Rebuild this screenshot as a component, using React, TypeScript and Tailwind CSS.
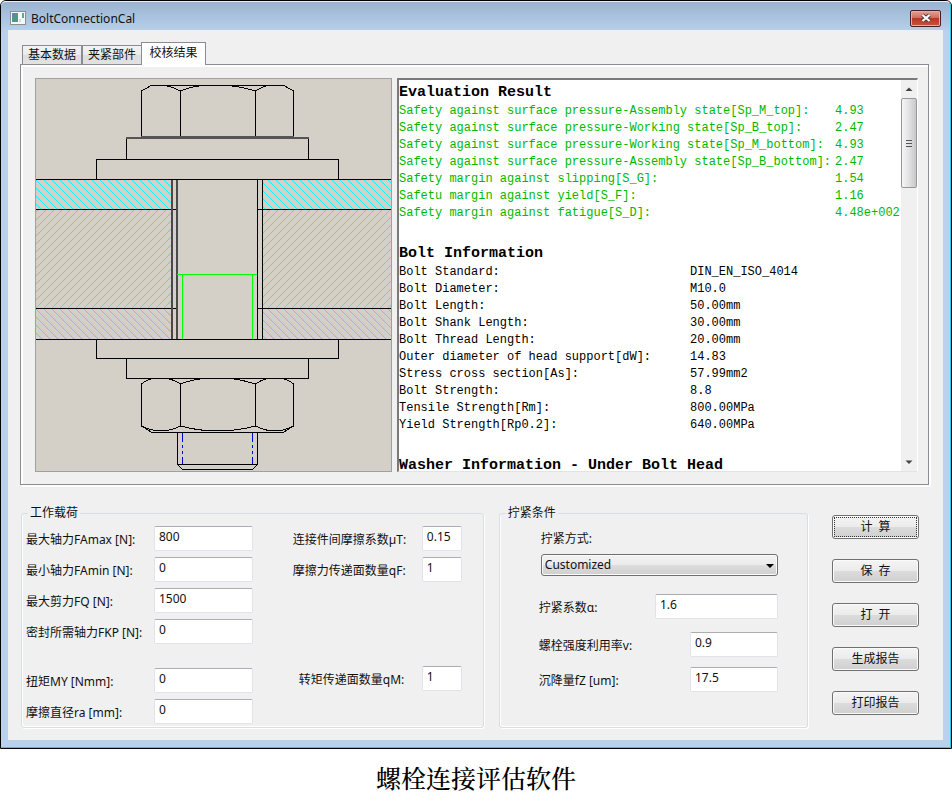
import { useId, useState } from "react";
import type { ReactNode } from "react";

/* ===== Report content ===== */
type Section = {
  title: string;
  ok?: boolean;
  rows: [string, string][];
};

const SECTIONS: Section[] = [
  {
    title: "Evaluation Result",
    ok: true,
    rows: [
      ["Safety against surface pressure-Assembly state[Sp_M_top]:", "4.93"],
      ["Safety against surface pressure-Working state[Sp_B_top]:", "2.47"],
      ["Safety against surface pressure-Working state[Sp_M_bottom]:", "4.93"],
      ["Safety against surface pressure-Assembly state[Sp_B_bottom]:", "2.47"],
      ["Safety margin against slipping[S_G]:", "1.54"],
      ["Safetu margin against yield[S_F]:", "1.16"],
      ["Safety margin against fatigue[S_D]:", "4.48e+002"],
    ],
  },
  {
    title: "Bolt Information",
    rows: [
      ["Bolt Standard:", "DIN_EN_ISO_4014"],
      ["Bolt Diameter:", "M10.0"],
      ["Bolt Length:", "50.00mm"],
      ["Bolt Shank Length:", "30.00mm"],
      ["Bolt Thread Length:", "20.00mm"],
      ["Outer diameter of head support[dW]:", "14.83"],
      ["Stress cross section[As]:", "57.99mm2"],
      ["Bolt Strength:", "8.8"],
      ["Tensile Strength[Rm]:", "800.00MPa"],
      ["Yield Strength[Rp0.2]:", "640.00MPa"],
    ],
  },
  { title: "Washer Information - Under Bolt Head", rows: [] },
];

const TABS = ["基本数据", "夹紧部件", "校核结果"];

/** Diagonals every 8px across a band, cut to the plates by a clip path */
function hatch(top: number, bottom: number, dir: 1 | -1) {
  const h = bottom - top;
  let d = "";
  for (let x = 36 - 104; x < 391 + 104; x += 8) {
    d += dir === 1 ? `M${x} ${top}l${h} ${h}` : `M${x} ${bottom}l${h} ${-h}`;
  }
  return d;
}

/** Section view of the clamped joint */
function BoltDrawing() {
  return (
    <svg
      viewBox="35 78 357 394"
      role="img"
      aria-label="Bolt connection"
      className="block h-[394px] w-[357px] shrink-0 bg-[#d4d0c8]"
      fill="none"
      stroke="#000"
      strokeWidth="1"
      shapeRendering="crispEdges"
    >
      <defs>
        <clipPath id="plates">
          <path d="M36 180H172V339H36ZM263 180H391V339H263Z" />
        </clipPath>
      </defs>

      {/* clamped plates */}
      <g clipPath="url(#plates)" stroke="#00ffff" shapeRendering="geometricPrecision">
        <path d={hatch(180, 209, 1)} />
        <path d={hatch(210, 308, -1)} />
        <path d={hatch(309, 339, 1)} />
      </g>
      <path d="M36 179.5H391M36 339.5H391M36 209.5H177M258 209.5H391M36 308.5H177M258 308.5H391" />
      <path d="M172 180V339M177 180V339" stroke="#4a4a4a" strokeWidth="2" />
      <path d="M257.5 180V339M262.5 180V339" />

      {/* head */}
      <path d="M141.5 137V91L151 85.5H284L293.5 91V137M180.5 91V137M255.5 91V137" />
      <path d="M165 85.5Q173 87 180.5 91Q192 86 205 85.5M229 85.5Q243 87 255.5 91Q261 87 268 85.5" />
      <path d="M141 137H294M126 138H309" stroke="#555" strokeWidth="2" />
      <path d="M126.5 159V138.5M308.5 138.5V159M126 159.500H309M96.5 179V159.5H338.5V179" />

      {/* lower washers and nut */}
      <path d="M96.5 340V358.5H338.5V340M126.5 359V378.5H308.5V359" />
      <path d="M141.5 384V426L152 432.5H283L293.5 426V384M180.5 384V426M255.5 384V426" />
      <path d="M141.5 384Q147 379 154 378.5M167 378.5Q175 380 180.5 384Q190 380 204 378.5M231 378.5Q243 380 255.5 384Q261 380 267 378.5M281 378.5Q288 379 293.5 384" />
      <path d="M141.5 426Q161 436 180.5 426Q217 436 255.5 426Q275 436 293.5 426" />

      {/* thread */}
      <path d="M177.5 433V464.5L182.5 469.5H252.5L257.5 464.5V433M177.5 464.5H257.5" />
      <path d="M177 274.5H257M182 275V339M252.5 275V339" stroke="#00ff00" />
      <path d="M182 433V464M252.5 433V464" stroke="#0000e0" strokeDasharray="9 3 3 3 3 3" />

      <path d="M35.5 78.5H391.5V471.5H35.5Z" stroke="#a0a0a0" />
    </svg>
  );
}

function ReportSection({ title, ok, rows }: Section) {
  return (
    <section className={rows.length > 0 ? "mb-[22px]" : ""}>
      <h2 className="py-1 text-[15px] leading-3 font-bold whitespace-nowrap text-black">{title}</h2>
      {rows.length > 0 && (
        <table className={ok ? "text-[#00b800]" : "text-black"}>
          <tbody>
            {rows.map(([name, value]) => (
              <tr key={name}>
                <th
                  scope="row"
                  className={
                    ok
                      ? "w-[436px] min-w-[436px] p-0 text-left font-normal whitespace-nowrap"
                      : "w-[291px] min-w-[291px] p-0 text-left font-normal whitespace-nowrap"
                  }
                >
                  {name}
                </th>
                <td className="p-0 whitespace-nowrap">{value}</td>
              </tr>
            ))}
          </tbody>
        </table>
      )}
    </section>
  );
}

function Scrollbar() {
  return (
    <div className="flex w-4 shrink-0 flex-col items-center bg-[#f0f0f0]" aria-hidden>
      <svg viewBox="0 0 16 18" className="h-[18px] w-4" fill="#444">
        <path d="M4.500 11L8 7.500L11.500 11Z" />
      </svg>
      <div className="flex h-[90px] w-full flex-col items-center justify-center gap-0.5 rounded-xs border border-[#979797] bg-linear-to-r from-[#f5f5f5] via-[#e2e2e4] to-[#c8c8cc]">
        <span className="h-px w-1.5 bg-[#555]" />
        <span className="h-px w-1.5 bg-[#555]" />
        <span className="h-px w-1.5 bg-[#555]" />
      </div>
      <svg viewBox="0 0 16 18" className="mt-auto h-[18px] w-4" fill="#444">
        <path d="M4.500 7.500L8 11L11.500 7.500Z" />
      </svg>
    </div>
  );
}

/** Label and text box on one line */
function Field({
  label,
  value,
  labelClass = "",
  inputClass,
}: {
  label: string;
  value: string;
  labelClass?: string;
  inputClass: string;
}) {
  const id = useId();
  return (
    <div className="flex items-center">
      <label htmlFor={id} className={`shrink-0 pt-0.5 whitespace-nowrap ${labelClass}`}>
        {label}
      </label>
      <input
        id={id}
        type="text"
        defaultValue={value}
        className={`h-[25px] rounded-xs border border-[#e2e3ea] border-t-[#abadb3] bg-white px-1 pb-1 outline-none ${inputClass}`}
      />
    </div>
  );
}

function Group({ title, className, children }: { title: string; className: string; children: ReactNode }) {
  return (
    <fieldset className={`min-w-0 rounded-[3px] border border-[#d5dfe5] shadow-[inset_1px_-1px_0_#fff,1px_1px_0_#fff] ${className}`}>
      <legend className="ml-1.5 px-0.5 leading-4">{title}</legend>
      {children}
    </fieldset>
  );
}

function Action({ children, focused = false }: { children: ReactNode; focused?: boolean }) {
  return (
    <button
      type="button"
      className="h-6 w-[87px] rounded-[3px] border border-[#707070] bg-[linear-gradient(#f4f4f4,#ebebeb_50%,#dcdcdc_50%,#cfcfcf)] p-px shadow-[inset_0_0_0_1px_#fbfbfb]"
    >
      <span
        className={
          focused
            ? "flex h-full items-center justify-center whitespace-pre border border-dotted border-[#333]"
            : "flex h-full items-center justify-center whitespace-pre"
        }
      >
        {children}
      </span>
    </button>
  );
}

export default function App() {
  const [tab, setTab] = useState(2);
  const leftLabel = "w-32";
  const leftInput = "w-[99px]";

  return (
    <main className="bg-white font-['Noto_Sans','Noto_Sans_CJK_SC',sans-serif] text-[12px] leading-4 text-[#111]">
      <div className="rounded-t-md border border-black bg-[#b9d1ea]">
        <div className="rounded-t-[5px] border-t border-r border-b border-[#29cbe8] border-t-[#e6f0fa] bg-[linear-gradient(#9ab4d1,#b9d1ea_30px)] px-[7px] pb-[7px]">
          {/* title bar */}
          <header className="flex h-7 items-center justify-between px-0.5">
            <div className="flex items-center gap-[5px] pt-1">
              <svg viewBox="0 0 16 14" className="h-3.5 w-4" aria-hidden>
                <rect x="0.5" y="0.5" width="15" height="13" fill="#f7f7f7" stroke="#8a8f96" />
                <rect x="2" y="2" width="6" height="9" fill="#4c9a86" />
                <rect x="2" y="2" width="3" height="4" fill="#5d86b8" />
                <rect x="9" y="8" width="2" height="3" fill="#d5dcd5" />
                <rect x="12" y="2" width="2" height="5" fill="#5fa893" />
              </svg>
              <h1 className="pt-0.5">BoltConnectionCal</h1>
            </div>
            <button
              type="button"
              aria-label="Close"
              className="mt-1 flex h-[17px] w-[31px] items-center justify-center rounded-xs border border-[#43202a] bg-[linear-gradient(#e5a095,#d2695a_48%,#b93722_50%,#c9523c)] shadow-[inset_0_0_0_1px_#e9aaa0]"
            >
              <svg viewBox="0 0 12 10" className="h-2.5 w-3">
                <path d="M2.500 2L9.500 8M9.500 2L2.500 8" stroke="#4b3b42" strokeWidth="4" />
                <path d="M2.500 2L9.500 8M9.500 2L2.500 8" stroke="#fff" strokeWidth="2.200" />
              </svg>
            </button>
          </header>

          {/* client area */}
          <div className="bg-[#f0f0f0] pt-3 pr-3.5 pb-3 pl-3">
            <div role="tablist" className="flex items-end pl-0.5">
              {TABS.map((name, i) => (
                <button
                  key={name}
                  type="button"
                  role="tab"
                  aria-selected={tab === i}
                  onClick={() => setTab(i)}
                  className={
                    tab === i
                      ? "-mb-px -ml-px h-[23px] w-[65px] border border-b-0 border-[#898c95] bg-white pb-0.5"
                      : "h-[19px] w-[60px] border border-b-0 border-[#898c95] bg-[linear-gradient(#f2f2f2,#ebebeb_50%,#dddddd_50%,#e2e2e2)]"
                  }
                >
                  {name}
                </button>
              ))}
            </div>

            <div role="tabpanel" className="border border-[#898c95] shadow-[inset_2px_2px_0_#fff,2px_2px_0_#fff]">
              <div className="flex gap-[5px] pt-[13px] pr-2.5 pb-3 pl-3.5">
                <BoltDrawing />
                <div className="flex h-[394px] min-w-0 flex-1 border-t-2 border-r border-b border-l-2 border-[#7a7a7a] border-r-white border-b-[#e3e3e3] bg-white">
                  <div className="min-w-0 flex-1 overflow-hidden pt-[3px] font-['Liberation_Mono',monospace] leading-[17px]">
                    {SECTIONS.map((s) => (
                      <ReportSection key={s.title} {...s} />
                    ))}
                  </div>
                  <Scrollbar />
                </div>
              </div>
            </div>

            <div className="mt-5 flex items-stretch pl-px">
              <Group title="工作载荷" className="flex-[3]">
                <div className="flex justify-between pt-[5px] pr-[21px] pb-[3px] pl-1">
                  <div className="flex flex-col gap-1.5">
                    <Field label="最大轴力FAmax [N]:" value="800" labelClass={leftLabel} inputClass={leftInput} />
                    <Field label="最小轴力FAmin [N]:" value="0" labelClass={leftLabel} inputClass={leftInput} />
                    <Field label="最大剪力FQ [N]:" value="1500" labelClass={leftLabel} inputClass={leftInput} />
                    <Field label="密封所需轴力FKP [N]:" value="0" labelClass={leftLabel} inputClass={leftInput} />
                    <div className="flex flex-col gap-1.5 pt-[18px]">
                      <Field label="扭矩MY [Nmm]:" value="0" labelClass={leftLabel} inputClass={leftInput} />
                      <Field label="摩擦直径ra [mm]:" value="0" labelClass={leftLabel} inputClass={leftInput} />
                    </div>
                  </div>
                  <div className="flex flex-col gap-1.5">
                    <Field label="连接件间摩擦系数µT:" value="0.15" labelClass="w-[129px]" inputClass="w-10" />
                    <Field label="摩擦力传递面数量qF:" value="1" labelClass="w-[129px]" inputClass="w-10" />
                    <div className="pt-[78px]">
                      <Field label="转矩传递面数量qM:" value="1" labelClass="w-[129px] pl-1.5" inputClass="w-10" />
                    </div>
                  </div>
                </div>
              </Group>

              <Group title="拧紧条件" className="ml-[15px] flex-[2]">
                <div className="flex flex-col pt-2.5 pr-[29px] pl-[39px]">
                  <label htmlFor="method" className="pl-0.5">
                    拧紧方式:
                  </label>
                  <div className="relative mt-[7px] ml-0.5">
                    <select
                      id="method"
                      className="h-[22px] w-full appearance-none rounded-[3px] border border-[#707070] bg-[linear-gradient(#f2f2f2,#ebebeb_50%,#dddddd_50%,#cfcfcf)] px-[3px] shadow-[inset_0_0_0_1px_#fbfbfb]"
                    >
                      <option>Customized</option>
                    </select>
                    <svg viewBox="0 0 8 4" className="pointer-events-none absolute top-[10px] right-1 h-1 w-2">
                      <path d="M0 0H8L4 4Z" />
                    </svg>
                  </div>
                  <div className="flex flex-col pt-[18px]">
                    <Field label="拧紧系数α:" value="1.6" labelClass="flex-1" inputClass="w-[123px]" />
                    <div className="flex flex-col gap-2.5 pt-[13px]">
                      <Field label="螺栓强度利用率v:" value="0.9" labelClass="flex-1" inputClass="w-[88px]" />
                      <Field label="沉降量fZ [um]:" value="17.5" labelClass="flex-1" inputClass="w-[88px]" />
                    </div>
                  </div>
                </div>
              </Group>

              <div className="mr-2.5 ml-6 flex flex-col gap-5 pt-2.5">
                <Action focused>计  算</Action>
                <Action>保  存</Action>
                <Action>打  开</Action>
                <Action>生成报告</Action>
                <Action>打印报告</Action>
              </div>
            </div>
          </div>
        </div>
      </div>

      <p className="pt-[11px] pb-2 text-center font-['Liberation_Serif','Noto_Serif_CJK_SC','Noto_Sans_CJK_SC',serif] text-[25px] leading-10 font-medium text-black">
        螺栓连接评估软件
      </p>
    </main>
  );
}
